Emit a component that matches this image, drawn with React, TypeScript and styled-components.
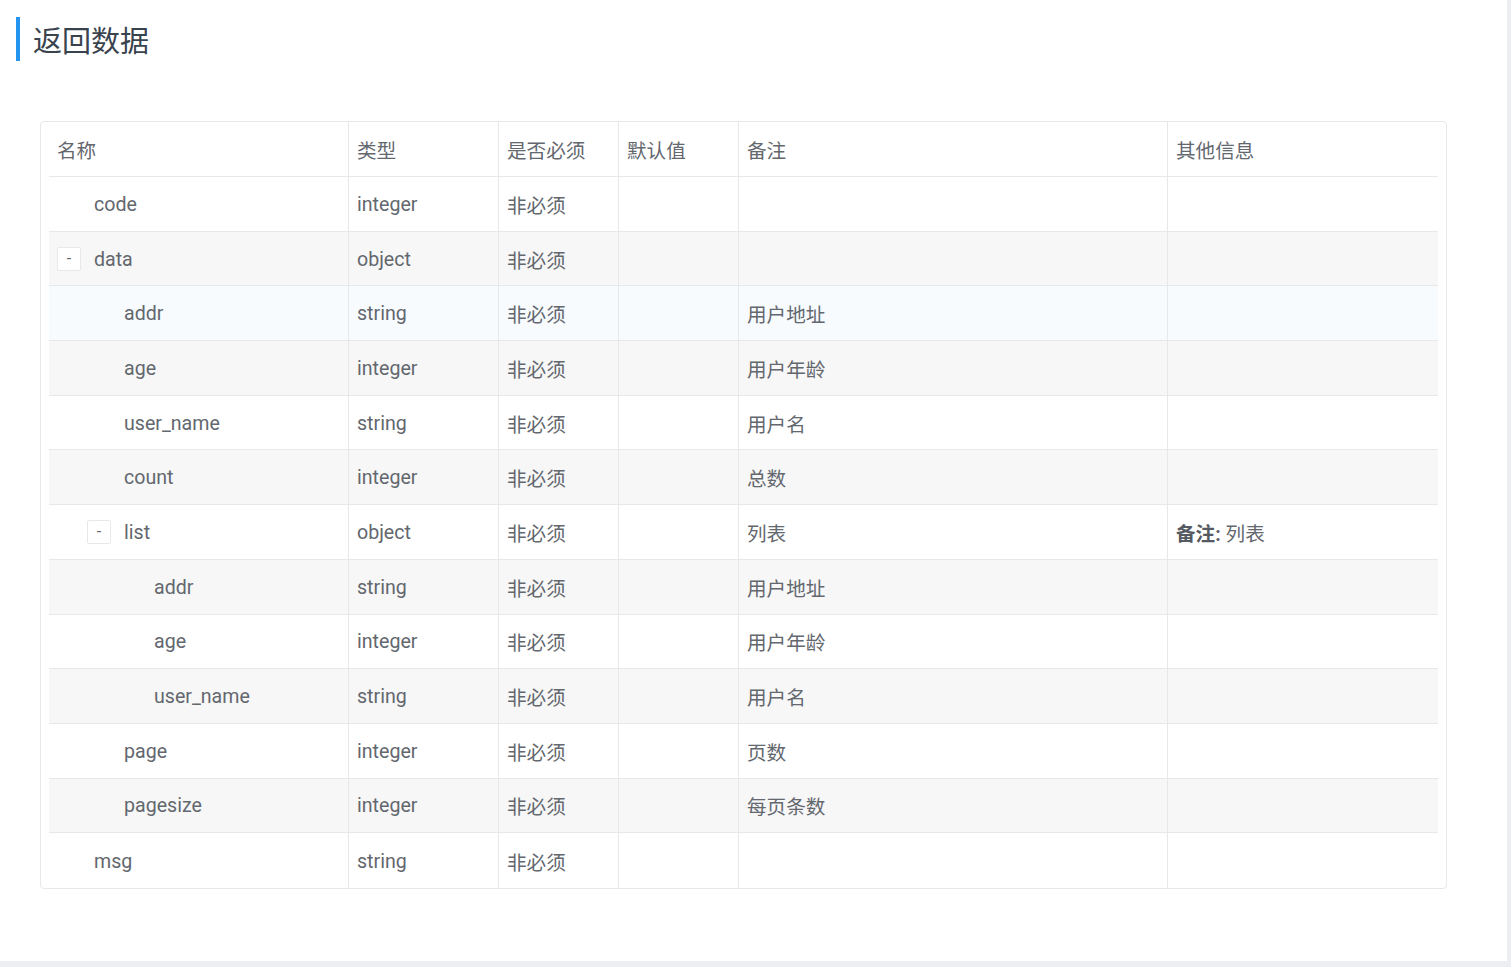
import React from "react";
import styled, { createGlobalStyle } from "styled-components";

const GlobalStyle = createGlobalStyle`
  html, body {
    margin: 0;
    padding: 0;
    background: #eceef2;
  }
  body {
    font-family: Roboto, "Noto Sans CJK SC", sans-serif;
  }
`;

const Panel = styled.div`
  width: 1507px;
  height: 961px;
  background: #ffffff;
  box-sizing: border-box;
  padding: 17px 0 0 16px;
  display: flex;
  flex-direction: column;
  gap: 60px;
`;

const Title = styled.h2`
  margin: 0;
  border-left: 4px solid #2395f1;
  padding: 3px 0 0 13px;
  height: 41px;
  line-height: 44px;
  font-size: 29px;
  font-weight: 400;
  color: #39434d;
  font-family: Roboto, "Noto Sans CJK SC", sans-serif;
`;

const Box = styled.div`
  margin-left: 24px;
  width: 1407px;
  box-sizing: border-box;
  border: 1px solid #e8e8e8;
  border-radius: 4px;
  padding: 0 8px;
`;

const Table = styled.table`
  width: 1389px;
  table-layout: fixed;
  border-collapse: separate;
  border-spacing: 0;
  font-size: 19.6px;
  color: #63676e;
`;

type RowKind = "plain" | "striped" | "hover";

const Row = styled.tr<{ $kind: RowKind }>`
  background: ${(p) =>
    p.$kind === "striped" ? "#f7f7f7" : p.$kind === "hover" ? "#f7fbfe" : "#ffffff"};
`;

const HeadCell = styled.th<{ $last?: boolean }>`
  box-sizing: border-box;
  height: 55px;
  padding: 0 8px;
  text-align: left;
  font-weight: 400;
  vertical-align: middle;
  border-bottom: 1px solid #e8e8e8;
  border-right: ${(p) => (p.$last ? "none" : "1px solid #e8e8e8")};
  white-space: nowrap;
`;

const Cell = styled.td<{ $last?: boolean; $end?: boolean }>`
  box-sizing: border-box;
  height: 54.7px;
  padding: 1px 8px 0;
  vertical-align: middle;
  border-bottom: ${(p) => (p.$end ? "none" : "1px solid #e8e8e8")};
  border-right: ${(p) => (p.$last ? "none" : "1px solid #e8e8e8")};
  white-space: nowrap;
`;

const NameWrap = styled.div<{ $level: number }>`
  display: flex;
  align-items: center;
  padding-left: ${(p) => p.$level * 30}px;
`;

const Toggle = styled.span`
  display: inline-flex;
  align-items: center;
  justify-content: center;
  width: 24px;
  height: 24px;
  box-sizing: border-box;
  border: 1px solid #e8e8e8;
  border-radius: 2px;
  background: #fff;
  font-size: 16px;
  line-height: 1;
  color: #63676e;
  margin-right: 13px;
  flex: none;
`;

const Spacer = styled.span`
  display: inline-block;
  width: 37px;
  flex: none;
`;

const Strong = styled.b`
  font-weight: 700;
  color: #555a62;
`;

type Field = {
  name: string;
  level: number;
  type: string;
  desc: string;
  toggle?: boolean;
  other?: string;
};

const fields: Field[] = [
  { name: "code", level: 0, type: "integer", desc: "" },
  { name: "data", level: 0, type: "object", desc: "", toggle: true },
  { name: "addr", level: 1, type: "string", desc: "用户地址" },
  { name: "age", level: 1, type: "integer", desc: "用户年龄" },
  { name: "user_name", level: 1, type: "string", desc: "用户名" },
  { name: "count", level: 1, type: "integer", desc: "总数" },
  { name: "list", level: 1, type: "object", desc: "列表", toggle: true, other: "列表" },
  { name: "addr", level: 2, type: "string", desc: "用户地址" },
  { name: "age", level: 2, type: "integer", desc: "用户年龄" },
  { name: "user_name", level: 2, type: "string", desc: "用户名" },
  { name: "page", level: 1, type: "integer", desc: "页数" },
  { name: "pagesize", level: 1, type: "integer", desc: "每页条数" },
  { name: "msg", level: 0, type: "string", desc: "" },
];

export default function App() {
  return (
    <>
      <GlobalStyle />
      <Panel>
        <Title>返回数据</Title>
        <Box>
          <Table>
            <colgroup>
              <col style={{ width: 300 }} />
              <col style={{ width: 150 }} />
              <col style={{ width: 120 }} />
              <col style={{ width: 120 }} />
              <col style={{ width: 429 }} />
              <col />
            </colgroup>
            <thead>
              <Row $kind="plain">
                <HeadCell>名称</HeadCell>
                <HeadCell>类型</HeadCell>
                <HeadCell>是否必须</HeadCell>
                <HeadCell>默认值</HeadCell>
                <HeadCell>备注</HeadCell>
                <HeadCell $last>其他信息</HeadCell>
              </Row>
            </thead>
            <tbody>
              {fields.map((f, i) => {
                const kind: RowKind = i === 2 ? "hover" : i % 2 === 1 ? "striped" : "plain";
                const end = i === fields.length - 1;
                return (
                  <Row key={i} $kind={kind}>
                    <Cell $end={end}>
                      <NameWrap $level={f.level}>
                        {f.toggle ? <Toggle>-</Toggle> : <Spacer />}
                        <span>{f.name}</span>
                      </NameWrap>
                    </Cell>
                    <Cell $end={end}>{f.type}</Cell>
                    <Cell $end={end}>非必须</Cell>
                    <Cell $end={end}></Cell>
                    <Cell $end={end}>{f.desc}</Cell>
                    <Cell $end={end} $last>
                      {f.other ? (
                        <>
                          <Strong>备注:</Strong> {f.other}
                        </>
                      ) : null}
                    </Cell>
                  </Row>
                );
              })}
            </tbody>
          </Table>
        </Box>
      </Panel>
    </>
  );
}
